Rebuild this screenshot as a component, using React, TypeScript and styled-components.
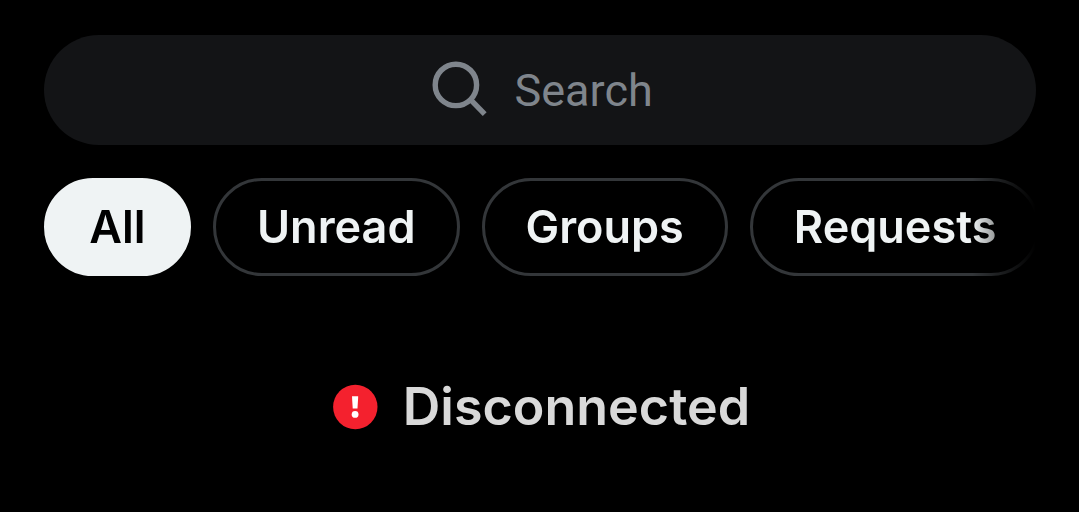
import React, { useState } from "react";
import styled, { createGlobalStyle } from "styled-components";

const GlobalStyle = createGlobalStyle`
  *, *::before, *::after { box-sizing: border-box; }
  body {
    margin: 0;
    background: #000;
    color: #eff3f4;
    font-family: Inter, "Liberation Sans", sans-serif;
  }
`;

const Page = styled.main`
  display: flex;
  flex-direction: column;
  padding: 35px 43px 0 44px;
`;

const SearchBar = styled.label`
  display: flex;
  align-items: center;
  justify-content: center;
  gap: 29px;
  height: 110px;
  padding-left: 4px;
  border-radius: 55px;
  background: #131416;
  color: #7f858c;
  cursor: text;
`;

const SearchIcon = styled.svg`
  flex: none;
  width: 56px;
  height: 56px;
  overflow: visible;
`;

const SearchInput = styled.input`
  width: 140px;
  padding: 2px 0 0;
  border: 0;
  outline: 0;
  background: transparent;
  color: #eff3f4;
  font: 400 45px/60px Roboto, sans-serif;

  &::placeholder {
    color: #7f858c;
    opacity: 1;
  }
`;

const FilterList = styled.nav`
  display: flex;
  gap: 22px;
  margin-top: 33px;
  overflow: hidden;
  mask-image: linear-gradient(to right, #000 calc(100% - 64px), transparent);
`;

const FilterChip = styled.button<{ $active: boolean }>`
  flex: none;
  min-width: 147px;
  height: 98px;
  padding: 0 41px;
  border: 3px solid ${({ $active }) => ($active ? "#eff3f4" : "#333639")};
  border-radius: 49px;
  background: ${({ $active }) => ($active ? "#eff3f4" : "transparent")};
  color: ${({ $active }) => ($active ? "#000" : "#eff3f4")};
  font: 620 45px/60px Inter, "Liberation Sans", sans-serif;
  white-space: nowrap;
  cursor: pointer;
`;

const Status = styled.div`
  display: flex;
  align-items: center;
  justify-content: center;
  gap: 25px;
  margin-top: 95px;
  padding-left: 3px;
  color: #d9d9d9;
  font-size: 52px;
  font-weight: 620;
  line-height: 72px;
`;

const AlertIcon = styled.svg`
  flex: none;
  width: 45px;
  height: 45px;
  overflow: visible;
`;

const filters = ["All", "Unread", "Groups", "Requests"];

export default function App() {
  const [active, setActive] = useState("All");
  return (
    <>
      <GlobalStyle />
      <Page>
        <SearchBar>
          <SearchIcon viewBox="0 0 56 56" fill="none" stroke="currentColor" strokeWidth="5.4" aria-hidden="true">
            <circle cx="25.9" cy="22.9" r="20.7" />
            <path d="M40.3 37.3L54.7 52.1" />
          </SearchIcon>
          <SearchInput type="text" placeholder="Search" aria-label="Search" />
        </SearchBar>
        <FilterList aria-label="Conversation filters">
          {filters.map((name) => (
            <FilterChip
              key={name}
              type="button"
              $active={name === active}
              aria-pressed={name === active}
              onClick={() => setActive(name)}
            >
              {name}
            </FilterChip>
          ))}
        </FilterList>
        <Status role="status">
          <AlertIcon viewBox="0 0 45 45" aria-hidden="true">
            <circle cx="22.3" cy="22" r="22.2" fill="#f4212e" />
            <path d="M19 11.2h6.2l-.7 12.4h-4.8z" fill="#fff" />
            <circle cx="22.1" cy="29.4" r="3.4" fill="#fff" />
          </AlertIcon>
          Disconnected
        </Status>
      </Page>
    </>
  );
}
